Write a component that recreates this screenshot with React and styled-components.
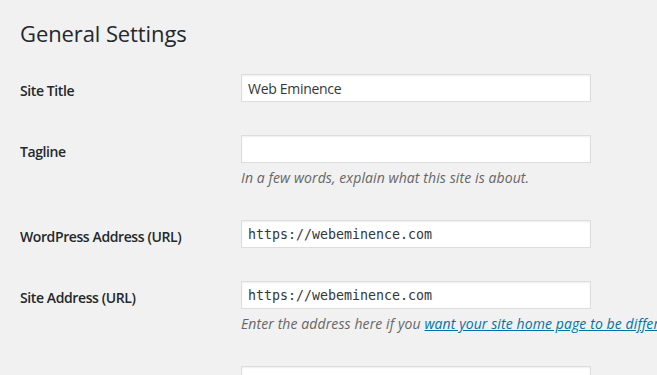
import React from "react";
import styled, { createGlobalStyle } from "styled-components";

const Global = createGlobalStyle`
  html, body { margin: 0; padding: 0; background: #f1f1f1; overflow: hidden; }
  body { font-family: "Open Sans", "Noto Sans", sans-serif; color: #23282d; }
`;

const Page = styled.div`
  padding: 0 0 0 20px;
  width: 900px;
`;

const Title = styled.h1`
  margin: 0;
  padding-top: 19px;
  font-size: 22px;
  font-weight: 400;
  line-height: 29px;
  letter-spacing: -0.1px;
  color: #23282d;
`;

const Rows = styled.div`
  display: flex;
  flex-direction: column;
  gap: 33px;
  margin-top: 26px;
`;

const Row = styled.div`
  display: grid;
  grid-template-columns: 221px 1fr;
  align-items: start;
`;

const Label = styled.label`
  padding-top: 7px;
  font-size: 14px;
  font-weight: 600;
  line-height: 20px;
  letter-spacing: -0.4px;
  color: #23282d;
`;

const Field = styled.div`
  display: flex;
  flex-direction: column;
`;

const Input = styled.input`
  box-sizing: border-box;
  width: 350px;
  height: 28px;
  margin: 0;
  padding: 0 6px;
  border: 1px solid #ddd;
  box-shadow: inset 0 1px 2px rgba(0, 0, 0, 0.07);
  background: #fff;
  color: #32373c;
  font-family: ${(p) => (p.$mono ? '"DejaVu Sans Mono", monospace' : '"Open Sans", "Noto Sans", sans-serif')};
  font-size: ${(p) => (p.$mono ? "13.3px" : "14px")};
  letter-spacing: ${(p) => (p.$mono ? "0" : "-0.3px")};
  outline: none;
`;

const Desc = styled.p`
  margin: 6px 0 0;
  font-size: 14px;
  font-style: italic;
  line-height: 18px;
  letter-spacing: 0.1px;
  color: #666;
  white-space: nowrap;
`;

const Link = styled.a`
  color: #0073aa;
  text-decoration: underline;
`;

export default function App() {
  return (
    <>
      <Global />
      <Page>
        <Title>General Settings</Title>
        <Rows>
          <Row>
            <Label htmlFor="blogname">Site Title</Label>
            <Field>
              <Input id="blogname" defaultValue="Web Eminence" />
            </Field>
          </Row>
          <Row>
            <Label htmlFor="tagline">Tagline</Label>
            <Field>
              <Input id="tagline" defaultValue="" />
              <Desc>In a few words, explain what this site is about.</Desc>
            </Field>
          </Row>
          <Row>
            <Label htmlFor="siteurl">WordPress Address (URL)</Label>
            <Field>
              <Input id="siteurl" $mono defaultValue="https://webeminence.com" />
            </Field>
          </Row>
          <Row>
            <Label htmlFor="home">Site Address (URL)</Label>
            <Field>
              <Input id="home" $mono defaultValue="https://webeminence.com" />
              <Desc>
                Enter the address here if you{" "}
                <Link href="#">
                  want your site home page to be different from your WordPress installation directory
                </Link>
                .
              </Desc>
            </Field>
          </Row>
          <Row>
            <Label htmlFor="admin_email">Administration Email Address</Label>
            <Field>
              <Input id="admin_email" defaultValue="" />
            </Field>
          </Row>
        </Rows>
      </Page>
    </>
  );
}
